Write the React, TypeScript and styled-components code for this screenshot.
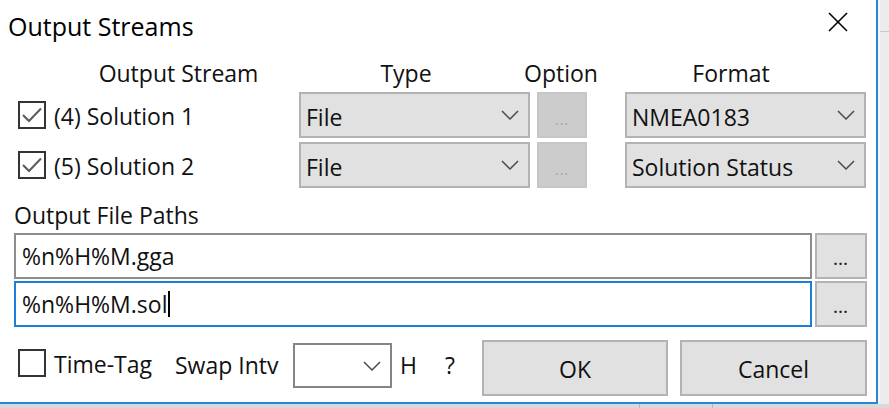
import React from "react";
import styled, { createGlobalStyle } from "styled-components";

const GlobalStyle = createGlobalStyle`
  html, body { margin: 0; padding: 0; }
  body {
    width: 889px;
    height: 408px;
    overflow: hidden;
    background: #e9e9e9;
    font-family: "Open Sans", "Noto Sans", "DejaVu Sans", sans-serif;
    color: #111;
  }
  * { box-sizing: border-box; }
`;

const Desktop = styled.div`
  display: grid;
  grid-template-columns: 878px 1fr;
  grid-template-rows: 404px 1fr;
  width: 889px;
  height: 408px;
`;

const BackWindow = styled.div`
  grid-column: 2;
  grid-row: 1;
  background: #ececec;
  border-left: 2px solid #f6f6f6;
  display: flex;
  flex-direction: column;
`;

const BackHeader = styled.div`
  height: 32px;
  border-bottom: 1px solid #c8c8c8;
`;

const BackFooter = styled.div`
  grid-column: 1 / span 2;
  grid-row: 2;
  display: grid;
  grid-template-columns: 640px 73px 1fr;
  background: #d9d9d9;
`;

const FooterCell = styled.div`
  border-right: 1px solid #b8b8b8;
  &:last-child { border-right: none; }
`;

const Dialog = styled.div`
  grid-column: 1;
  grid-row: 1;
  background: #fff;
  border-right: 2px solid #2a85d6;
  border-bottom: 2px solid #2a85d6;
  display: flex;
  flex-direction: column;
`;

const TitleBar = styled.div`
  height: 59px;
  display: flex;
  justify-content: space-between;
  align-items: flex-start;
  padding: 9px 28px 0 8px;
`;

const Title = styled.div`
  font-size: 25px;
  line-height: 34px;
  color: #000;
`;

const CloseButton = styled.div`
  margin-top: 3px;
  width: 20px;
  height: 20px;
  display: flex;
`;

const StreamGrid = styled.div`
  display: grid;
  grid-template-columns: 285px 238px 88px 241px;
  grid-template-rows: 29px 46px 46px;
  row-gap: 4px;
  padding-left: 14px;
`;

const ColumnHeader = styled.div<{ $pl?: number; $pr?: number }>`
  display: flex;
  justify-content: center;
  align-items: center;
  white-space: nowrap;
  font-size: 23px;
  line-height: 29px;
  padding-left: ${(p) => p.$pl ?? 0}px;
  padding-right: ${(p) => p.$pr ?? 0}px;
  margin-top: -1px;
`;

const CheckRow = styled.div<{ $lift?: number }>`
  display: flex;
  align-items: center;
  gap: 8px;
  padding-left: 4px;
  margin-bottom: ${(p) => p.$lift ?? 0}px;
`;

const Label = styled.span<{ $lift?: number; $pl?: number }>`
  font-size: 23px;
  line-height: 29px;
  white-space: nowrap;
  padding-top: 3px;
  padding-left: ${(p) => p.$pl ?? 0}px;
  margin-bottom: ${(p) => p.$lift ?? 0}px;
`;

const BoxSvg = styled.svg`
  flex: none;
  display: block;
`;

const Combo = styled.div<{ $w: number; $h?: number; $white?: boolean; $lift?: number }>`
  width: ${(p) => p.$w}px;
  height: ${(p) => p.$h ?? 46}px;
  background: ${(p) => (p.$white ? "#ffffff" : "#e1e1e1")};
  border: 2px solid ${(p) => (p.$white ? "#858585" : "#b3b3b3")};
  display: flex;
  align-items: center;
  justify-content: space-between;
  padding: 0 9px 0 5px;
  font-size: 23px;
  margin-bottom: ${(p) => p.$lift ?? 0}px;
  white-space: nowrap;
`;

const ComboText = styled.span`
  padding-top: 4px;
`;

const Chevron = styled.svg`
  flex: none;
  display: block;
`;

const DotsButton = styled.div<{ $disabled?: boolean; $w: number; $h: number }>`
  width: ${(p) => p.$w}px;
  height: ${(p) => p.$h}px;
  background: ${(p) => (p.$disabled ? "#cccccc" : "#e1e1e1")};
  border: 2px solid ${(p) => (p.$disabled ? "#c6c6c6" : "#b3b3b3")};
  color: ${(p) => (p.$disabled ? "#a4a4a4" : "#222")};
  font-weight: ${(p) => (p.$disabled ? 400 : 700)};
  display: flex;
  align-items: center;
  justify-content: center;
  font-size: 14px;
  letter-spacing: 1px;
  padding-top: ${(p) => (p.$disabled ? 8 : 6)}px;
`;

const SectionLabel = styled.div`
  height: 45px;
  padding: 13px 0 0 14px;
  font-size: 23px;
  line-height: 29px;
`;

const PathList = styled.div`
  display: flex;
  flex-direction: column;
  gap: 2px;
`;

const PathRow = styled.div`
  display: grid;
  grid-template-columns: 798px 52px;
  column-gap: 3px;
  height: 46px;
  padding-left: 14px;
`;

const PathInput = styled.div<{ $focused?: boolean }>`
  background: #fff;
  border: 2px solid ${(p) => (p.$focused ? "#1a7fd8" : "#8c8c8c")};
  display: flex;
  align-items: center;
  padding-left: 6px;
  font-size: 23px;
  white-space: nowrap;
`;

const Caret = styled.span`
  display: inline-block;
  width: 1.5px;
  height: 26px;
  background: #000;
  margin-left: 1px;
`;

const BottomRow = styled.div`
  display: grid;
  grid-template-columns: 161px 118px 99px 52px 38px 186px 199px;
  align-items: center;
  height: 56px;
  margin-top: 13px;
  padding-left: 14px;
`;

const PushButton = styled.div<{ $w: number }>`
  width: ${(p) => p.$w}px;
  height: 56px;
  justify-self: end;
  background: #e1e1e1;
  border: 2px solid #b3b3b3;
  display: flex;
  align-items: center;
  justify-content: center;
  font-size: 23px;
  padding-top: 2px;
`;

const CheckBox = ({ checked }: { checked: boolean }) => (
  <BoxSvg width="28" height="28" viewBox="0 0 28 28">
    <rect x="1" y="1" width="26" height="26" fill="#fff" stroke="#333" strokeWidth="2" />
    {checked && (
      <polyline points="5,14 11,20 23,7.5" fill="none" stroke="#5a5a5a" strokeWidth="2" />
    )}
  </BoxSvg>
);

const Down = () => (
  <Chevron width="18" height="10" viewBox="0 0 18 10">
    <polyline points="1,1 9,9 17,1" fill="none" stroke="#4a4a4a" strokeWidth="1.5" />
  </Chevron>
);

export default function App() {
  return (
    <>
      <GlobalStyle />
      <Desktop>
        <Dialog>
          <TitleBar>
            <Title>Output Streams</Title>
            <CloseButton>
              <svg width="20" height="20" viewBox="0 0 20 20">
                <line x1="1" y1="1" x2="19" y2="19" stroke="#000" strokeWidth="1.6" />
                <line x1="19" y1="1" x2="1" y2="19" stroke="#000" strokeWidth="1.6" />
              </svg>
            </CloseButton>
          </TitleBar>

          <StreamGrid>
            <ColumnHeader $pl={44}>Output Stream</ColumnHeader>
            <ColumnHeader $pr={24}>Type</ColumnHeader>
            <ColumnHeader $pr={40}>Option</ColumnHeader>
            <ColumnHeader $pr={29}>Format</ColumnHeader>

            <CheckRow>
              <CheckBox checked />
              <Label>(4) Solution 1</Label>
            </CheckRow>
            <Combo $w={231}>
              <ComboText>File</ComboText>
              <Down />
            </Combo>
            <DotsButton $disabled $w={50} $h={46}>...</DotsButton>
            <Combo $w={241}>
              <ComboText>NMEA0183</ComboText>
              <Down />
            </Combo>

            <CheckRow>
              <CheckBox checked />
              <Label>(5) Solution 2</Label>
            </CheckRow>
            <Combo $w={231}>
              <ComboText>File</ComboText>
              <Down />
            </Combo>
            <DotsButton $disabled $w={50} $h={46}>...</DotsButton>
            <Combo $w={241}>
              <ComboText>Solution Status</ComboText>
              <Down />
            </Combo>
          </StreamGrid>

          <SectionLabel>Output File Paths</SectionLabel>
          <PathList>
            <PathRow>
              <PathInput>%n%H%M.gga</PathInput>
              <DotsButton $w={52} $h={46}>...</DotsButton>
            </PathRow>
            <PathRow>
              <PathInput $focused>
                %n%H%M.sol
                <Caret />
              </PathInput>
              <DotsButton $w={52} $h={46}>...</DotsButton>
            </PathRow>
          </PathList>

          <BottomRow>
            <CheckRow $lift={10}>
              <CheckBox checked={false} />
              <Label>Time-Tag</Label>
            </CheckRow>
            <Label $lift={8}>Swap Intv</Label>
            <Combo $w={99} $h={45} $white $lift={5}>
              <span />
              <Down />
            </Combo>
            <Label $lift={8} $pl={8}>H</Label>
            <Label $lift={8} $pl={1}>?</Label>
            <PushButton $w={186}>OK</PushButton>
            <PushButton $w={187}>Cancel</PushButton>
          </BottomRow>
        </Dialog>
        <BackWindow>
          <BackHeader />
        </BackWindow>
        <BackFooter>
          <FooterCell />
          <FooterCell />
          <FooterCell />
        </BackFooter>
      </Desktop>
    </>
  );
}
